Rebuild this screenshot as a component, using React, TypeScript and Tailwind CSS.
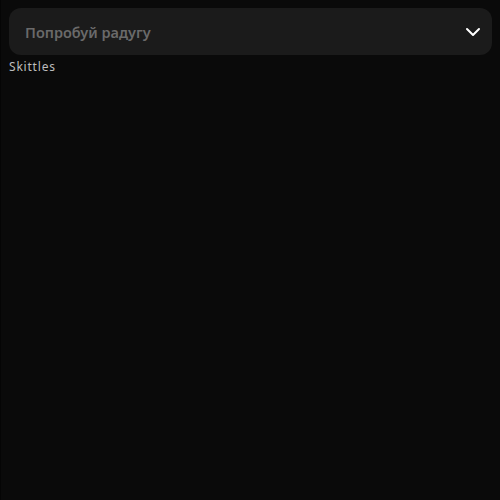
import React from 'react';
import { ChevronDown } from 'lucide-react';

const App = () => {
  return (
    <div className="min-h-[500px] w-full bg-[#0a0a0a] border-l border-[#050505] p-2 font-['Noto_Sans',sans-serif]">
      <button className="flex h-[47px] w-full items-center justify-between rounded-xl bg-[#1b1b1b] pl-4 pr-[7px] text-left">
        <span className="text-[14.5px] font-semibold leading-5 text-[#6a6a6a]">Попробуй радугу</span>
        <ChevronDown className="h-6 w-6 text-white" strokeWidth={2} />
      </button>
      <div className="mt-[4px] text-[12px] leading-4 tracking-[0.8px] text-[#bdbdbd]">Skittles</div>
    </div>
  );
};

export default App;
